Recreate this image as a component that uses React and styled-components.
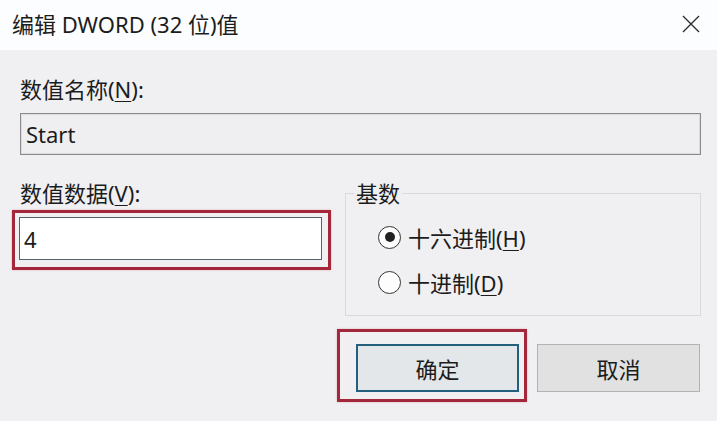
import React from "react";
import styled, { createGlobalStyle } from "styled-components";

const GlobalStyle = createGlobalStyle`
  html, body {
    margin: 0;
    padding: 0;
    background: #f0f0f2;
  }
  body {
    font-family: "Noto Sans", "Noto Sans CJK SC", sans-serif;
    color: #1a1a1a;
  }
`;

const FONT = `"Noto Sans", "Noto Sans CJK SC", sans-serif`;

const App = () => {
  return (
    <>
      <GlobalStyle />
      <Window>
        <TitleBar>
          <Title>编辑 DWORD (32 位)值</Title>
          <CloseBtn aria-label="关闭">
            <svg width="18" height="18" viewBox="0 0 18 18">
              <path d="M1 1 L17 17 M17 1 L1 17" stroke="#2b2b2b" strokeWidth="1.3" fill="none" />
            </svg>
          </CloseBtn>
        </TitleBar>

        <Body>
          <Label>数值名称(<u>N</u>):</Label>
          <NameField>Start</NameField>

          <LowerGrid>
            <Column>
              <Label $flush>数值数据(<u>V</u>):</Label>
              <Highlight $pad="4px 6px 7px 4px" $mt="5px">
                <ValueField>4</ValueField>
              </Highlight>
            </Column>

            <GroupBox>
              <Legend>基数</Legend>
              <RadioList>
                <RadioRow>
                  <Radio $checked />
                  <span>十六进制(<u>H</u>)</span>
                </RadioRow>
                <RadioRow>
                  <Radio />
                  <span>十进制(<u>D</u>)</span>
                </RadioRow>
              </RadioList>
            </GroupBox>
          </LowerGrid>

          <ButtonRow>
            <Highlight $pad="12px 5px 7px 16px">
              <Button $primary>确定</Button>
            </Highlight>
            <Button $offset>取消</Button>
          </ButtonRow>
        </Body>
      </Window>
    </>
  );
};

export default App;

const Window = styled.div`
  width: 717px;
  height: 421px;
  display: flex;
  flex-direction: column;
  background: #f0f0f2;
  overflow: hidden;
  font-family: ${FONT};
`;

const TitleBar = styled.div`
  height: 50px;
  flex-shrink: 0;
  display: flex;
  align-items: center;
  justify-content: space-between;
  padding: 0 17px 0 12px;
  background: #fcfdfe;
  box-sizing: border-box;
`;

const Title = styled.div`
  font-size: 22px;
  line-height: 26px;
  color: #1c1c1c;
  margin-top: -3px;
`;

const CloseBtn = styled.div`
  width: 18px;
  height: 18px;
  display: flex;
  margin-top: -2px;
`;

const Body = styled.div`
  flex: 1;
  padding: 27px 16px 0 20px;
  display: flex;
  flex-direction: column;
`;

const Label = styled.div`
  font-size: 22px;
  line-height: 24px;
  color: #1c1c1c;
  u {
    text-underline-offset: 3px;
    text-decoration-thickness: 1px;
  }
`;

const NameField = styled.div`
  margin-top: 12px;
  height: 42px;
  box-sizing: border-box;
  border: 1px solid #8a8a8a;
  box-shadow: inset 0 0 0 1px #dcdcde;
  background: #efeff1;
  padding-left: 5px;
  display: flex;
  align-items: center;
  font-size: 22px;
  color: #1c1c1c;
`;

const LowerGrid = styled.div`
  margin-top: 26px;
  display: grid;
  grid-template-columns: 311px 356px;
  column-gap: 14px;
  align-items: start;
`;

const Column = styled.div`
  display: flex;
  flex-direction: column;
`;

const Highlight = styled.div`
  border: 3px solid #a3283c;
  padding: ${(p) => p.$pad};
  margin-top: ${(p) => p.$mt || 0};
  margin-left: ${(p) => (p.$mt ? "-8px" : 0)};
  box-shadow: 0 0 2px rgba(200, 60, 80, 0.35);
  display: flex;
`;

const ValueField = styled.div`
  flex: 1;
  height: 43px;
  box-sizing: border-box;
  border: 1px solid #56636a;
  background: #ffffff;
  padding-left: 4px;
  display: flex;
  align-items: center;
  font-size: 22px;
  color: #1c1c1c;
`;

const GroupBox = styled.fieldset`
  margin: 0;
  padding: 0;
  height: 135px;
  box-sizing: border-box;
  border: 1px solid #d9d9dc;
  min-width: 0;
`;

const Legend = styled.legend`
  margin-left: 8px;
  padding: 0 2px;
  font-size: 22px;
  line-height: 24px;
  color: #1c1c1c;
`;

const RadioList = styled.div`
  padding: 17px 0 0 32px;
  display: flex;
  flex-direction: column;
  gap: 15px;
`;

const RadioRow = styled.div`
  height: 30px;
  display: flex;
  align-items: center;
  gap: 7px;
  font-size: 22px;
  color: #1c1c1c;
  u {
    text-underline-offset: 3px;
    text-decoration-thickness: 1px;
  }
`;

const Radio = styled.span`
  width: 23px;
  height: 23px;
  box-sizing: border-box;
  border-radius: 50%;
  border: 1px solid #333;
  background: #fdfdfd;
  display: flex;
  align-items: center;
  justify-content: center;
  &::after {
    content: "";
    width: 10px;
    height: 10px;
    border-radius: 50%;
    background: ${(p) => (p.$checked ? "#222" : "transparent")};
  }
`;

const ButtonRow = styled.div`
  margin-top: 13px;
  display: flex;
  justify-content: flex-end;
  align-items: flex-start;
  gap: 10px;
  padding-right: 1px;
`;

const Button = styled.div`
  width: 163px;
  height: 48px;
  box-sizing: border-box;
  margin-top: ${(p) => (p.$offset ? "15px" : 0)};
  border: ${(p) => (p.$primary ? "2px solid #245f7d" : "1px solid #b3b3b3")};
  background: ${(p) => (p.$primary ? "#e3e7ea" : "#e1e1e1")};
  display: flex;
  align-items: center;
  justify-content: center;
  font-size: 22px;
  color: #1c1c1c;
`;
